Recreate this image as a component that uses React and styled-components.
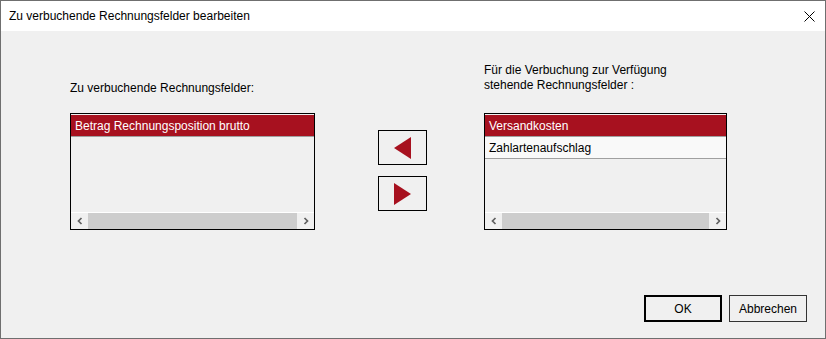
import React from 'react'
import styled, { createGlobalStyle } from 'styled-components'

const GlobalStyle = createGlobalStyle`
  html, body {
    margin: 0;
    padding: 0;
    background: #f0f0f0;
  }
  body {
    font-family: "Liberation Sans", Arial, sans-serif;
    font-size: 12px;
    color: #000;
  }
`

const RED = '#a7111f'

const Window = styled.div`
  box-sizing: border-box;
  width: 826px;
  height: 339px;
  border: 1px solid #6f6f6f;
  background: #f0f0f0;
  display: flex;
  flex-direction: column;
`

const TitleBar = styled.div`
  height: 30px;
  flex: none;
  background: #fff;
  display: flex;
  align-items: center;
  justify-content: space-between;
  padding: 0 10px 0 8px;
`

const Title = styled.span`
  font-size: 12px;
  line-height: 15px;
  padding-top: 1px;
`

const CloseButton = styled.button`
  width: 12px;
  height: 12px;
  padding: 0;
  border: 0;
  background: none;
  display: flex;
  align-items: center;
  justify-content: center;
`

const Body = styled.div`
  display: grid;
  grid-template-columns: 245px 169px 243px;
  grid-template-rows: 82px 117px;
  padding-left: 69px;
`

const Label = styled.div`
  align-self: end;
  line-height: 15px;
  margin-bottom: ${p => p.$drop}px;
`

const List = styled.div`
  box-sizing: border-box;
  height: 117px;
  border: 1px solid #000;
  padding-top: 1px;
  background: #f0f0f0;
  display: flex;
  flex-direction: column;
`

const Row = styled.div`
  height: 21px;
  line-height: 22px;
  padding-left: 4px;
  border-bottom: 1px solid #a0a0a0;
  background: ${p => (p.$selected ? RED : '#f9f9f9')};
  color: ${p => (p.$selected ? '#fff' : '#000')};
  white-space: nowrap;
`

const ScrollBar = styled.div`
  margin-top: auto;
  height: 16px;
  border-top: 1px solid #fff;
  display: flex;
  background: #f0f0f0;
`

const ScrollArrow = styled.span`
  width: 17px;
  flex: none;
  display: flex;
  align-items: center;
  justify-content: center;
`

const ScrollThumb = styled.span`
  flex: 1;
  background: #cdcdcd;
`

const Movers = styled.div`
  display: flex;
  flex-direction: column;
  gap: 11px;
  padding: 17px 0 0 63px;
`

const MoveButton = styled.button`
  box-sizing: border-box;
  width: 49px;
  height: 35px;
  padding: 0;
  border: 1px solid #000;
  background: #f0f0f0;
  display: flex;
  align-items: center;
  justify-content: center;
`

const Footer = styled.div`
  margin-top: auto;
  display: flex;
  justify-content: flex-end;
  gap: 7px;
  padding: 0 18px 16px 0;
`

const DialogButton = styled.button`
  box-sizing: border-box;
  width: 78px;
  height: 27px;
  padding: 0;
  font-family: inherit;
  font-size: 12px;
  color: #000;
  background: #f0f0f0;
  border: ${p => (p.$default ? '2px solid #000' : '1px solid #333')};
`

const Chevron = ({ dir }) => (
  <svg width="6" height="8" viewBox="0 0 6 8">
    <path
      d={dir === 'left' ? 'M4.5 1 L1.5 4 L4.5 7' : 'M1.5 1 L4.5 4 L1.5 7'}
      fill="none"
      stroke="#606060"
      strokeWidth="1.7"
    />
  </svg>
)

const Triangle = ({ dir }) => (
  <svg width="17" height="22" viewBox="0 0 17 22">
    <polygon points={dir === 'left' ? '0,11 17,0 17,22' : '0,0 17,11 0,22'} fill={RED} />
  </svg>
)

const ListBox = ({ items }) => (
  <List>
    {items.map((item, i) => (
      <Row key={item} $selected={i === 0}>
        {item}
      </Row>
    ))}
    <ScrollBar>
      <ScrollArrow>
        <Chevron dir="left" />
      </ScrollArrow>
      <ScrollThumb />
      <ScrollArrow>
        <Chevron dir="right" />
      </ScrollArrow>
    </ScrollBar>
  </List>
)

const App = () => (
  <>
    <GlobalStyle />
    <Window>
      <TitleBar>
        <Title>Zu verbuchende Rechnungsfelder bearbeiten</Title>
        <CloseButton aria-label="Schließen">
          <svg width="11" height="11" viewBox="0 0 11 11">
            <path d="M0.5 0.5 L10.5 10.5 M10.5 0.5 L0.5 10.5" stroke="#000" strokeWidth="1" />
          </svg>
        </CloseButton>
      </TitleBar>

      <Body>
        <Label $drop={17}>Zu verbuchende Rechnungsfelder:</Label>
        <span />
        <Label $drop={20}>
          Für die Verbuchung zur Verfügung
          <br />
          stehende Rechnungsfelder :
        </Label>

        <ListBox items={['Betrag Rechnungsposition brutto']} />
        <Movers>
          <MoveButton aria-label="Hinzufügen">
            <Triangle dir="left" />
          </MoveButton>
          <MoveButton aria-label="Entfernen">
            <Triangle dir="right" />
          </MoveButton>
        </Movers>
        <ListBox items={['Versandkosten', 'Zahlartenaufschlag']} />
      </Body>

      <Footer>
        <DialogButton $default>OK</DialogButton>
        <DialogButton>Abbrechen</DialogButton>
      </Footer>
    </Window>
  </>
)

export default App
